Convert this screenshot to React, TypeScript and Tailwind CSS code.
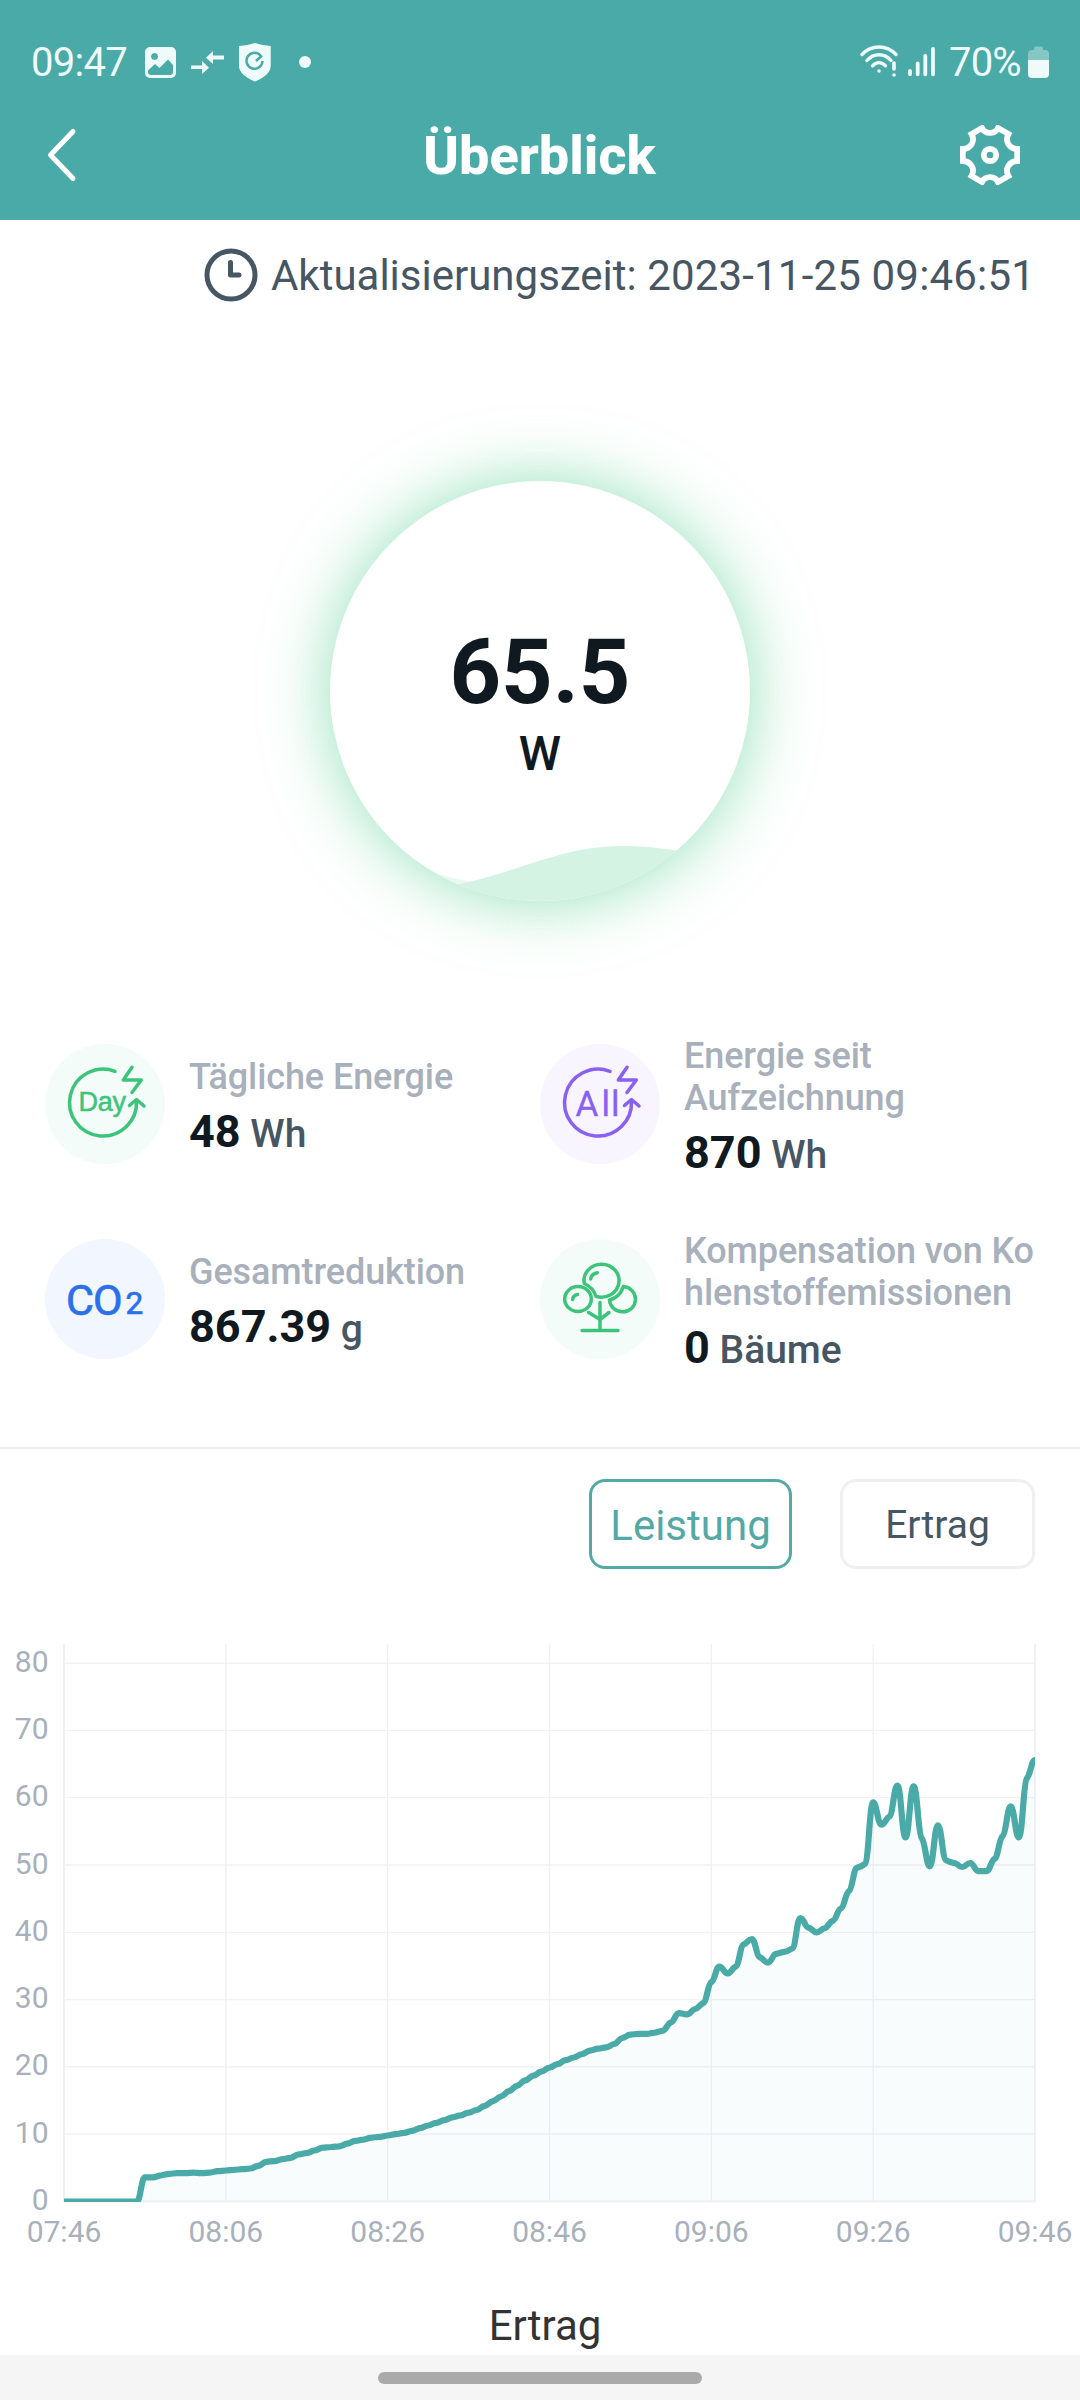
import { useState, type ReactNode } from 'react';

// Power in W, one sample per minute from 07:46 to 09:46
const powerData = [
  0, 0, 0, 0, 0, 0, 0, 0, 0, 0,
  3.6, 3.6, 3.9, 4.1, 4.2, 4.2, 4.3, 4.2, 4.3, 4.5,
  4.6, 4.7, 4.8, 4.9, 5.3, 5.9, 6, 6.3, 6.5, 7,
  7.2, 7.6, 8, 8.1, 8.2, 8.6, 9, 9.2, 9.5, 9.6,
  9.8, 10, 10.2, 10.5, 10.9, 11.3, 11.7, 12.1, 12.5, 12.8,
  13.2, 13.6, 14.2, 14.9, 15.6, 16.4, 17.2, 18, 18.7, 19.3,
  19.9, 20.4, 21, 21.4, 21.9, 22.4, 22.7, 22.9, 23.4, 24.3,
  24.8, 24.9, 24.9, 25.1, 25.4, 26.6, 28, 27.8, 28.6, 29.5,
  32.6, 34.9, 33.9, 34.9, 38.2, 39, 36.3, 35.5, 36.8, 37.1,
  37.6, 42.1, 40.7, 40, 40.6, 41.7, 43.5, 46.1, 49.6, 50.2,
  59.3, 56, 57.2, 61.8, 54.1, 61.7, 54, 49.8, 55.9, 50.7,
  50.3, 49.7, 50.3, 49.1, 49.1, 50.9, 54.3, 58.7, 54.1, 62.9,
  65.6,
];

const xLabels = ['07:46', '08:06', '08:26', '08:46', '09:06', '09:26', '09:46'];
const yLabels = [0, 10, 20, 30, 40, 50, 60, 70, 80];

const LEFT = 64;
const RIGHT = 1035;
const TOP = 75;
const BOTTOM = 632.5;
const STEP = (RIGHT - LEFT) / (powerData.length - 1);

const toX = (i: number) => LEFT + i * STEP;
const toY = (v: number) => BOTTOM - v * 6.73;

const buildLine = () => {
  const slope = (i: number) => {
    const prev = powerData[i - 1] ?? powerData[i];
    const next = powerData[i + 1] ?? powerData[i];
    // peaks and valleys stay flat
    if ((powerData[i] - prev) * (next - powerData[i]) <= 0) return 0;
    return ((toY(next) - toY(prev)) / 2) * 0.09;
  };
  let d = `M${toX(0)} ${toY(powerData[0])}`;
  for (let i = 1; i < powerData.length; i++) {
    const x0 = toX(i - 1) + STEP * 0.45;
    const y0 = toY(powerData[i - 1]) + slope(i - 1);
    const x1 = toX(i) - STEP * 0.45;
    const y1 = toY(powerData[i]) - slope(i);
    d += ` C${x0.toFixed(1)} ${y0.toFixed(1)} ${x1.toFixed(1)} ${y1.toFixed(1)} ${toX(i).toFixed(1)} ${toY(powerData[i]).toFixed(1)}`;
  }
  return d;
};

function StatusBar() {
  return (
    <div className="flex h-10 items-center pl-[31px] pr-[31px] text-[40px] leading-10 text-[#effbfa]">
      <span className="w-[114px] tracking-[-0.7px]">09:47</span>
      <svg width="170" height="40" viewBox="145 43 170 40" fill="#effbfa">
        <path
          fillRule="evenodd"
          d="M150 47h21a5 5 0 0 1 5 5v21a5 5 0 0 1-5 5h-21a5 5 0 0 1-5-5V52a5 5 0 0 1 5-5ZM154.500 53a3.500 3.500 0 1 0 .01 0ZM148 70.500v1.500a3 3 0 0 0 3 3h19a3 3 0 0 0 3-3V65l-5-5.500-8.500 8.500-4.500-4Z"
        />
        <path d="M191 65.500h11V61l7 6.700-7 6.300v-5h-11ZM224 55.500h-11V51l-7 6.700 7 6.300v-4.500h11Z" />
        <path d="M239 46c6-.5 11-1.500 16-3 5 1.500 10 2.500 15.700 3v20c0 7-8 12.500-15.700 15.500-8-3-16-8.500-16-15.500Z" />
        <path
          d="M260.500 55.500a8 8 0 1 0 2 5.500M256 61l6-5.500"
          fill="none"
          stroke="#49aaa7"
          strokeWidth="2.500"
        />
        <circle cx="305" cy="62" r="6" />
      </svg>
      <svg className="ml-auto" width="80" height="40" viewBox="860 43 80 40" fill="none" stroke="#effbfa" strokeLinecap="round">
        <path
          strokeWidth="3.400"
          d="M862 54.500Q869 47 879 47T896 54.500M867 60.500Q872 54.700 879 54.700T891 60.500M872.500 65.800Q875.500 62.600 879 62.600T885.500 65.800"
        />
        <path strokeWidth="3.600" d="M879 71h.01M894 63v6M894 75h.01" />
        <path strokeWidth="3.800" d="M910 71v3.300M917.700 63.500v10.800M925.300 56v18.300M933 49v25.300" />
      </svg>
      <span className="w-[79px] pl-[9px] tracking-[-0.8px]">70%</span>
      <svg className="ml-[9px]" width="21" height="40" viewBox="1028 43 21 40">
        <path d="M1034 50v-1.500a2 2 0 0 1 2-2h5a2 2 0 0 1 2 2V50h2a4 4 0 0 1 4 4v7h-21v-7a4 4 0 0 1 4-4Z" fill="#86c7c4" />
        <path d="M1028 60h21v14a4 4 0 0 1-4 4h-13a4 4 0 0 1-4-4Z" fill="#effbfa" />
      </svg>
    </div>
  );
}

function Header() {
  return (
    <header className="h-[220px] bg-[#49aaa7] pt-[43px] text-white">
      <StatusBar />
      <div className="mt-[11px] flex h-[121px] items-center justify-between pl-[45px] pr-[60px]">
        <button className="w-[60px]">
          <svg width="34" height="60" viewBox="0 0 34 60" fill="none" stroke="currentColor" strokeWidth="5" strokeLinecap="round" strokeLinejoin="round">
            <path d="M28 6.500 5.500 30 28 53.500" />
          </svg>
        </button>
        <h1 className="pl-[14px] pt-[3px] text-[54px] leading-[60px] font-extrabold">Überblick</h1>
        <button>
          <svg width="60" height="60" viewBox="0 0 60 60" fill="none" stroke="currentColor">
            <path
              strokeWidth="5.800"
              d="M22 3C25 9.500 35 9.500 38 3L48.500 9C44.500 16 49 23.500 57.200 24V36C49 36.500 44.500 44 48.500 51L38 57C35 50.500 25 50.500 22 57L11.500 51C15.500 44 11 36.500 2.800 36V24C11 23.500 15.500 16 11.500 9Z"
            />
            <circle cx="30" cy="30" r="6.200" strokeWidth="5.800" />
          </svg>
        </button>
      </div>
    </header>
  );
}

function Gauge() {
  return (
    <div className="mt-[151px] flex justify-center">
      <div className="relative h-[420px] w-[420px] rounded-full bg-white shadow-[0_0_66px_rgba(58,200,128,0.55)]">
        <svg className="absolute inset-0" width="420" height="420" viewBox="0 0 420 420">
          <defs>
            <clipPath id="dial">
              <circle cx="210" cy="210" r="210" />
            </clipPath>
          </defs>
          <g clipPath="url(#dial)">
            <path d="M95 389C112 394 126 398 141 401V420H95Z" fill="#e9f9f1" />
            <path d="M110 406C160 400 205 378 250 369C285 362 320 365 350 370V420H110Z" fill="#d5f3e3" />
          </g>
        </svg>
        <div className="relative pt-[142px] text-center text-[#111920]">
          <div className="text-[90px] leading-[100px] font-bold">65.5</div>
          <div className="mt-[5px] text-5xl leading-[52px] font-medium">W</div>
        </div>
      </div>
    </div>
  );
}

// Ring with a bolt and an arrow head, shared by both energy icons
function EnergyRing({ color, children }: { color: string; children: ReactNode }) {
  return (
    <>
      <g fill="none" stroke={color} strokeWidth="3.500" strokeLinecap="round" strokeLinejoin="round">
        <path d="M70 27.300A33.500 33.500 0 1 0 91.500 57" />
        <path d="M87 23.300 78.300 36H96.300L87 48.500" />
        <path d="M84.500 61.500 91.500 55.500 99 62" />
      </g>
      {children}
    </>
  );
}

const stats = [
  {
    label: 'Tägliche Energie',
    value: '48',
    unit: 'Wh',
    bg: '#f3fcf8',
    icon: (
      <EnergyRing color="#3dc47b">
        <text x="33.500" y="67" fontSize="27" fill="#3dc47b" stroke="#3dc47b" strokeWidth="0.500" letterSpacing="-0.300" className="font-['Liberation_Sans',sans-serif]">
          Day
        </text>
      </EnergyRing>
    ),
  },
  {
    label: 'Energie seit\nAufzeichnung',
    value: '870',
    unit: 'Wh',
    bg: '#f8f5ff',
    icon: (
      <EnergyRing color="#8860f2">
        <text x="35.500 61.500 71" y="71.500" fontSize="35" fill="#8860f2" stroke="#8860f2" strokeWidth="0.300">
          All
        </text>
      </EnergyRing>
    ),
  },
  {
    label: 'Gesamtreduktion',
    value: '867.39',
    unit: 'g',
    bg: '#f1f6ff',
    icon: (
      <g fill="#2970ea" stroke="#2970ea" strokeWidth="0.700">
        <text x="21 48" y="75.500" fontSize="43">
          CO
        </text>
        <text x="80.500" y="75" fontSize="31.500">
          2
        </text>
      </g>
    ),
  },
  {
    label: 'Kompensation von Ko\nhlenstoffemissionen',
    value: '0',
    unit: 'Bäume',
    bg: '#f3fcf8',
    icon: (
      <g fill="none" stroke="#3dc47b" strokeWidth="3.500" strokeLinecap="round" strokeLinejoin="round">
        <path d="M44.300 44.500A17.500 16.500 0 1 1 56 57.300Q53 48.500 44.300 44.500Z" />
        <path d="M50.700 40Q51 35 57.300 33.700M32.700 60.500Q33 56.300 37.500 55.500" />
        <ellipse cx="38" cy="60" rx="13.300" ry="12.500" />
        <path d="M83.300 47.500A13 12.700 0 1 1 69.500 61Q80.500 58 83.300 47.500Z" />
        <path d="M60 63.500V91.500M48.700 73.500 60 80.500 69 73.500M42 91.500H78" />
      </g>
    ),
  },
];

function Stats() {
  return (
    <div className="mt-[133px] grid grid-cols-2 gap-y-[55px] pl-[45px] pr-[45px]">
      {stats.map((item) => (
        <div key={item.label} className="flex h-[140px] items-center gap-6">
          <svg className="shrink-0" width="120" height="120" viewBox="0 0 120 120">
            <circle cx="60" cy="60" r="60" fill={item.bg} />
            {item.icon}
          </svg>
          <div className="shrink-0 pt-[3px]">
            <p className="text-4xl leading-[42px] font-medium tracking-[-0.1px] whitespace-pre text-[#a8b0bc]">{item.label}</p>
            <p className="mt-[12px] text-[39px] leading-[43px] font-medium text-[#475663]">
              <span className="text-[45px] font-bold text-[#111920]">{item.value}</span> {item.unit}
            </p>
          </div>
        </div>
      ))}
    </div>
  );
}

function PowerChart() {
  const line = buildLine();
  return (
    <svg className="block shrink-0" width="1080" height="700" viewBox="0 0 1080 700">
      <defs>
        <clipPath id="plot">
          <rect x={LEFT} y={TOP} width={RIGHT - LEFT} height={BOTTOM - TOP + 0.5} />
        </clipPath>
      </defs>
      {yLabels.map((v) => (
        <g key={v}>
          <line x1={LEFT} x2={RIGHT} y1={toY(v)} y2={toY(v)} stroke="#f1f1f3" strokeWidth={v === 0 ? 2 : 1.3} />
          <text x="48.500" y={toY(v) + 8.5} textAnchor="end" fontSize="30" fill="#a8b0bc">
            {v}
          </text>
        </g>
      ))}
      {xLabels.map((label, i) => (
        <g key={label}>
          <line x1={toX(i * 20)} x2={toX(i * 20)} y1={TOP} y2={BOTTOM} stroke="#f1f1f3" strokeWidth={i % 6 ? 1.3 : 2} />
          <text x={toX(i * 20)} y="673" textAnchor="middle" fontSize="30" fill="#a8b0bc">
            {label}
          </text>
        </g>
      ))}
      <g clipPath="url(#plot)">
        <path d={`${line} V${BOTTOM} H${LEFT} Z`} fill="#42b4c8" fillOpacity="0.04" />
        <path d={line} fill="none" stroke="#49aaa7" strokeWidth="6.200" strokeLinejoin="round" />
      </g>
    </svg>
  );
}

export default function App() {
  const [tab, setTab] = useState('Leistung');

  return (
    <div className="flex h-[2400px] w-[1080px] flex-col overflow-hidden bg-white font-[Roboto,sans-serif]">
      <Header />

      {/* Last update */}
      <div className="flex h-[110px] items-center justify-end gap-[13px] pr-[45px] text-[42px] text-[#475663]">
        <svg width="54" height="54" viewBox="0 0 54 54" fill="none" stroke="currentColor" strokeWidth="5">
          <circle cx="27" cy="27" r="24" />
          <path d="M26.500 14.500V27H35" strokeLinecap="round" strokeLinejoin="round" />
        </svg>
        <p>
          Aktualisierungszeit: <span className="tracking-[0.18px]">2023-11-25 09:46:51</span>
        </p>
      </div>

      <Gauge />
      <Stats />

      <div className="mt-[78px] h-[2px] shrink-0 bg-[#eeeff0]" />

      {/* Chart tabs */}
      <div className="mt-[30px] flex h-[90px] shrink-0 justify-end gap-12 pr-[45px]">
        {['Leistung', 'Ertrag'].map((name) => (
          <button
            key={name}
            onClick={() => setTab(name)}
            className={
              tab === name
                ? 'w-[203px] rounded-2xl border-3 border-[#55a9a5] pt-[2px] text-[42px] text-[#55a9a5]'
                : 'w-[195px] rounded-2xl border-3 border-[#eef0f2] pt-[2px] text-[39px] text-[#475663]'
            }
          >
            {name}
          </button>
        ))}
      </div>

      <PowerChart />

      <h2 className="mt-[36px] pl-[10px] text-center text-[42px] leading-[42px] text-[#333]">Ertrag</h2>

      {/* Gesture bar */}
      <div className="mt-auto flex h-[45px] shrink-0 justify-center bg-[#f5f5f5] pt-[17px]">
        <div className="h-3 w-[324px] rounded-full bg-[#aaa]" />
      </div>
    </div>
  );
}
